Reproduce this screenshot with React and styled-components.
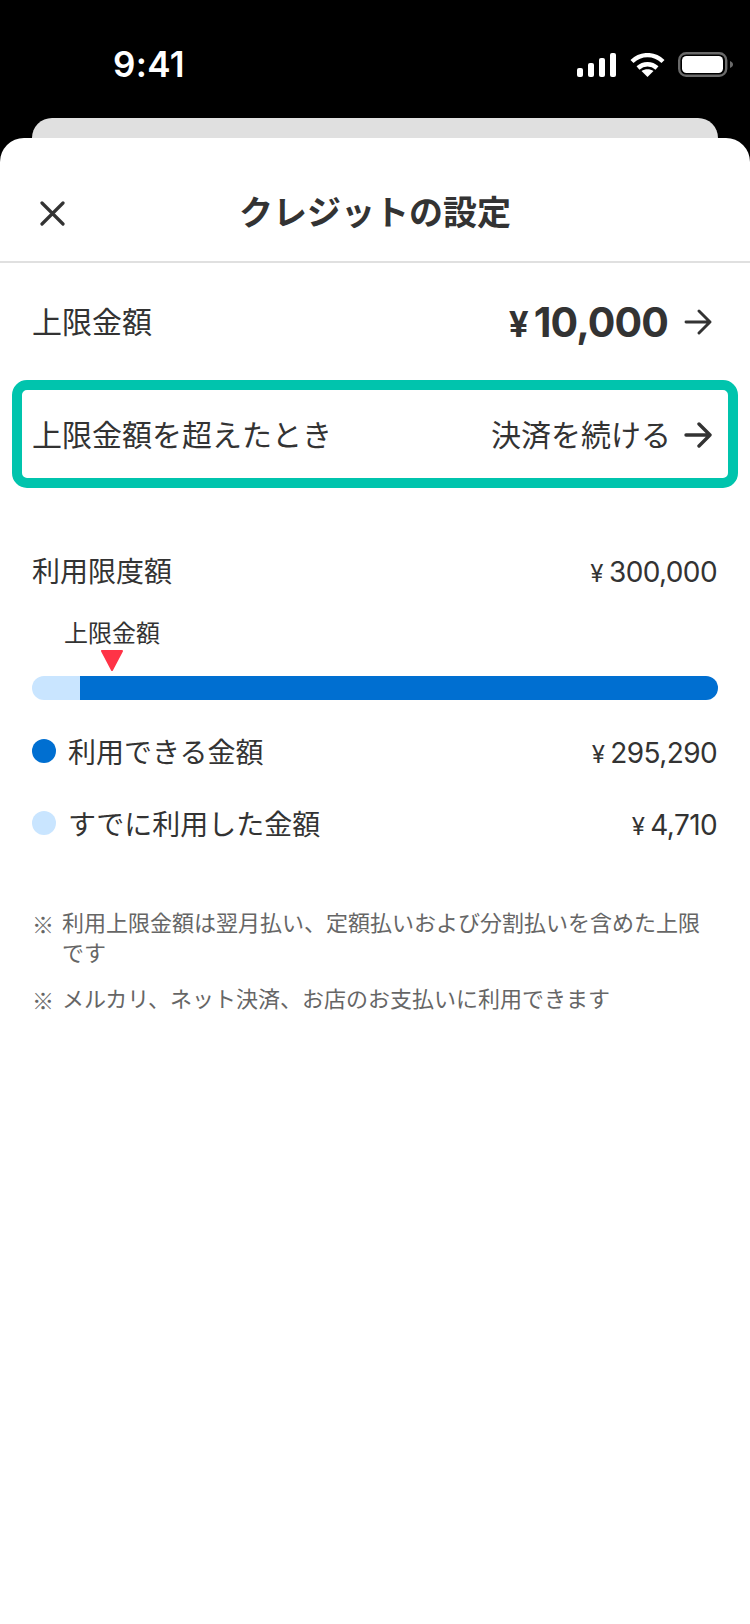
import styled, { createGlobalStyle } from 'styled-components';

const GlobalStyle = createGlobalStyle`
    html, body{
        margin: 0;
        padding: 0;
        background: #000;
    }
    body{
        font-family: Inter, "Noto Sans CJK JP", sans-serif;
        color: #333;
    }
`

const Screen = styled.div`
    width: 750px;
    height: 1624px;
    display: flex;
    flex-direction: column;
    background: #000;
    overflow: hidden;
`

const StatusBar = styled.div`
    height: 118px;
    flex: none;
    display: flex;
    justify-content: space-between;
    align-items: flex-start;
    padding: 43px 17px 0 113px;
    box-sizing: border-box;
`

const Time = styled.div`
    color: #fff;
    font-size: 35px;
    font-weight: 600;
    line-height: 42px;
    letter-spacing: .3px;
`

const StatusIcons = styled.div`
    display: flex;
    align-items: center;
    gap: 13.5px;
    padding-top: 9px;
`

const BackCard = styled.div`
    height: 20px;
    flex: none;
    margin: 0 32px;
    background: #e0e0e0;
    border-radius: 24px 24px 0 0;
`

const Sheet = styled.div`
    flex: 1;
    background: #fff;
    border-radius: 24px 24px 0 0;
`

const Header = styled.header`
    height: 125px;
    display: grid;
    grid-template-columns: 1fr auto 1fr;
    align-items: center;
    padding: 27px 40px 0;
    box-sizing: border-box;
    border-bottom: 2px solid #e0e0e0;
`

const Title = styled.h1`
    margin: 0;
    font-size: 34px;
    font-weight: 700;
    line-height: 40px;
    color: #333;
`

const CloseIcon = styled.svg`
    width: 25px;
    height: 25px;
    display: block;
    stroke: #333;
    stroke-width: 3.2;
    stroke-linecap: round;
    fill: none;
`

const SettingRow = styled.div`
    height: 117px;
    display: flex;
    align-items: center;
    justify-content: space-between;
    padding: 0 38px 0 32px;
`

const HighlightRow = styled.div`
    height: 108px;
    margin: 0 12px;
    display: flex;
    align-items: center;
    justify-content: space-between;
    padding: 2px 16px 0 10px;
    box-sizing: border-box;
    border: 10px solid #00c4ad;
    border-radius: 15px;
`

const RowLabel = styled.span`
    font-size: 30px;
    line-height: 40px;
    color: #333;
`

const RowValue = styled.div`
    display: flex;
    align-items: center;
    gap: ${p => p.$gap}px;
    font-size: 30px;
    line-height: 40px;
`

const BigAmount = styled.span`
    display: flex;
    align-items: baseline;
    gap: 6px;
    padding-top: 2px;
    font-size: 41px;
    font-weight: 700;
    letter-spacing: -.9px;
    color: #333;
`

const BigYen = styled.span`
    font-size: 35px;
`

const Arrow = styled.svg`
    width: 28px;
    height: 26px;
    display: block;
    stroke: #333;
    stroke-width: ${p => p.$bold ? 3.4 : 2.9};
    stroke-linecap: round;
    stroke-linejoin: round;
    fill: none;
`

const LimitSection = styled.section`
    padding: 62px 32px 0;
`

const LineRow = styled.div`
    display: flex;
    align-items: center;
    justify-content: space-between;
    height: 40px;
    font-size: 28px;
    color: #333;
`

const Amount = styled.span`
    display: flex;
    align-items: baseline;
    gap: 6px;
    padding: 4px 1px 0 0;
    font-size: 28px;
    letter-spacing: -.6px;
`

const Yen = styled.span`
    font-size: 24px;
`

const Marker = styled.div`
    display: inline-flex;
    flex-direction: column;
    align-items: center;
    margin: 30px 0 0 32px;
`

const MarkerLabel = styled.span`
    font-size: 24px;
    line-height: 28px;
    color: #333;
`

const MarkerArrow = styled.svg`
    width: 24px;
    height: 23px;
    display: block;
    margin-top: 1px;
    fill: #ff3347;
    stroke: #ff3347;
    stroke-width: 2;
    stroke-linejoin: round;
`

const Bar = styled.div`
    height: 24px;
    margin-top: 4px;
    display: flex;
`

const BarUsed = styled.div`
    width: ${p => p.$width}px;
    background: #c9e5ff;
    border-radius: 12px 0 0 12px;
`

const BarRest = styled.div`
    flex: 1;
    background: #006fd1;
    border-radius: 0 12px 12px 0;
`

const Legend = styled.div`
    display: flex;
    flex-direction: column;
    gap: 32px;
    margin-top: 31px;
`

const LegendName = styled.span`
    display: flex;
    align-items: center;
    gap: 12px;
`

const Dot = styled.i`
    width: 24px;
    height: 24px;
    border-radius: 50%;
    background: ${p => p.$color};
`

const Notes = styled.ul`
    list-style: none;
    margin: 0;
    padding: 65px 32px 0;
    display: flex;
    flex-direction: column;
    gap: 16px;
`

const Note = styled.li`
    display: flex;
    font-size: 22px;
    line-height: 30px;
    color: #666;
`

const NoteMark = styled.span`
    flex: 0 0 30px;
    font-family: "Noto Sans CJK JP", sans-serif;
`

const Chevron = ({ bold }) => (
    <Arrow $bold={bold} viewBox="0 0 28 26">
        <path d="M2 13H26M15 2L26 13L15 24" />
    </Arrow>
)

const SignalIcon = () => (
    <svg width="39" height="24" viewBox="0 0 39 24" fill="#fff">
        <rect x="0" y="15" width="6" height="9" rx="2" />
        <rect x="11" y="10" width="6" height="14" rx="2" />
        <rect x="22" y="5" width="6" height="19" rx="2" />
        <rect x="33" y="0" width="6" height="24" rx="2" />
    </svg>
)

const WifiIcon = () => (
    <svg width="35" height="24" viewBox="0 0 35 24" fill="none" stroke="#fff" strokeWidth="4.4">
        <path d="M2 8.5C11 0 24 0 33 8.5" />
        <path d="M8 15C13.5 10 21.5 10 27 15" />
        <path d="M17.5 24L11.5 18C15 15.5 20 15.5 23.5 18Z" fill="#fff" stroke="none" />
    </svg>
)

const BatteryIcon = () => (
    <svg width="55" height="25" viewBox="0 0 55 25">
        <rect x="1.2" y="1.2" width="47" height="22.6" rx="7" fill="none" stroke="#6a6a6a" strokeWidth="2.4" />
        <rect x="4" y="4" width="41" height="17" rx="4.5" fill="#fff" />
        <path d="M52 9C54 10 55 11 55 12.5C55 14 54 15 52 16Z" fill="#6a6a6a" />
    </svg>
)

function App(){
    return(
        <Screen>
            <GlobalStyle />
            <StatusBar>
                <Time>9:41</Time>
                <StatusIcons>
                    <SignalIcon />
                    <WifiIcon />
                    <BatteryIcon />
                </StatusIcons>
            </StatusBar>
            <BackCard />
            <Sheet>
                <Header>
                    <CloseIcon viewBox="0 0 25 25">
                        <path d="M2 2L23 23M23 2L2 23" />
                    </CloseIcon>
                    <Title>クレジットの設定</Title>
                </Header>
                <SettingRow>
                    <RowLabel>上限金額</RowLabel>
                    <RowValue $gap={16}>
                        <BigAmount><BigYen>¥</BigYen>10,000</BigAmount>
                        <Chevron />
                    </RowValue>
                </SettingRow>
                <HighlightRow>
                    <RowLabel>上限金額を超えたとき</RowLabel>
                    <RowValue $gap={13}>
                        決済を続ける
                        <Chevron bold />
                    </RowValue>
                </HighlightRow>
                <LimitSection>
                    <LineRow>
                        <span>利用限度額</span>
                        <Amount><Yen>¥</Yen>300,000</Amount>
                    </LineRow>
                    <Marker>
                        <MarkerLabel>上限金額</MarkerLabel>
                        <MarkerArrow viewBox="0 0 24 23">
                            <path d="M2 2H22L12 21Z" />
                        </MarkerArrow>
                    </Marker>
                    <Bar>
                        <BarUsed $width={48} />
                        <BarRest />
                    </Bar>
                    <Legend>
                        <LineRow>
                            <LegendName><Dot $color="#006fd1" />利用できる金額</LegendName>
                            <Amount><Yen>¥</Yen>295,290</Amount>
                        </LineRow>
                        <LineRow>
                            <LegendName><Dot $color="#c9e5ff" />すでに利用した金額</LegendName>
                            <Amount><Yen>¥</Yen>4,710</Amount>
                        </LineRow>
                    </Legend>
                </LimitSection>
                <Notes>
                    <Note><NoteMark>※</NoteMark><span>利用上限金額は翌月払い、定額払いおよび分割払いを含めた上限です</span></Note>
                    <Note><NoteMark>※</NoteMark><span>メルカリ、ネット決済、お店のお支払いに利用できます</span></Note>
                </Notes>
            </Sheet>
        </Screen>
    )
}

export default App
